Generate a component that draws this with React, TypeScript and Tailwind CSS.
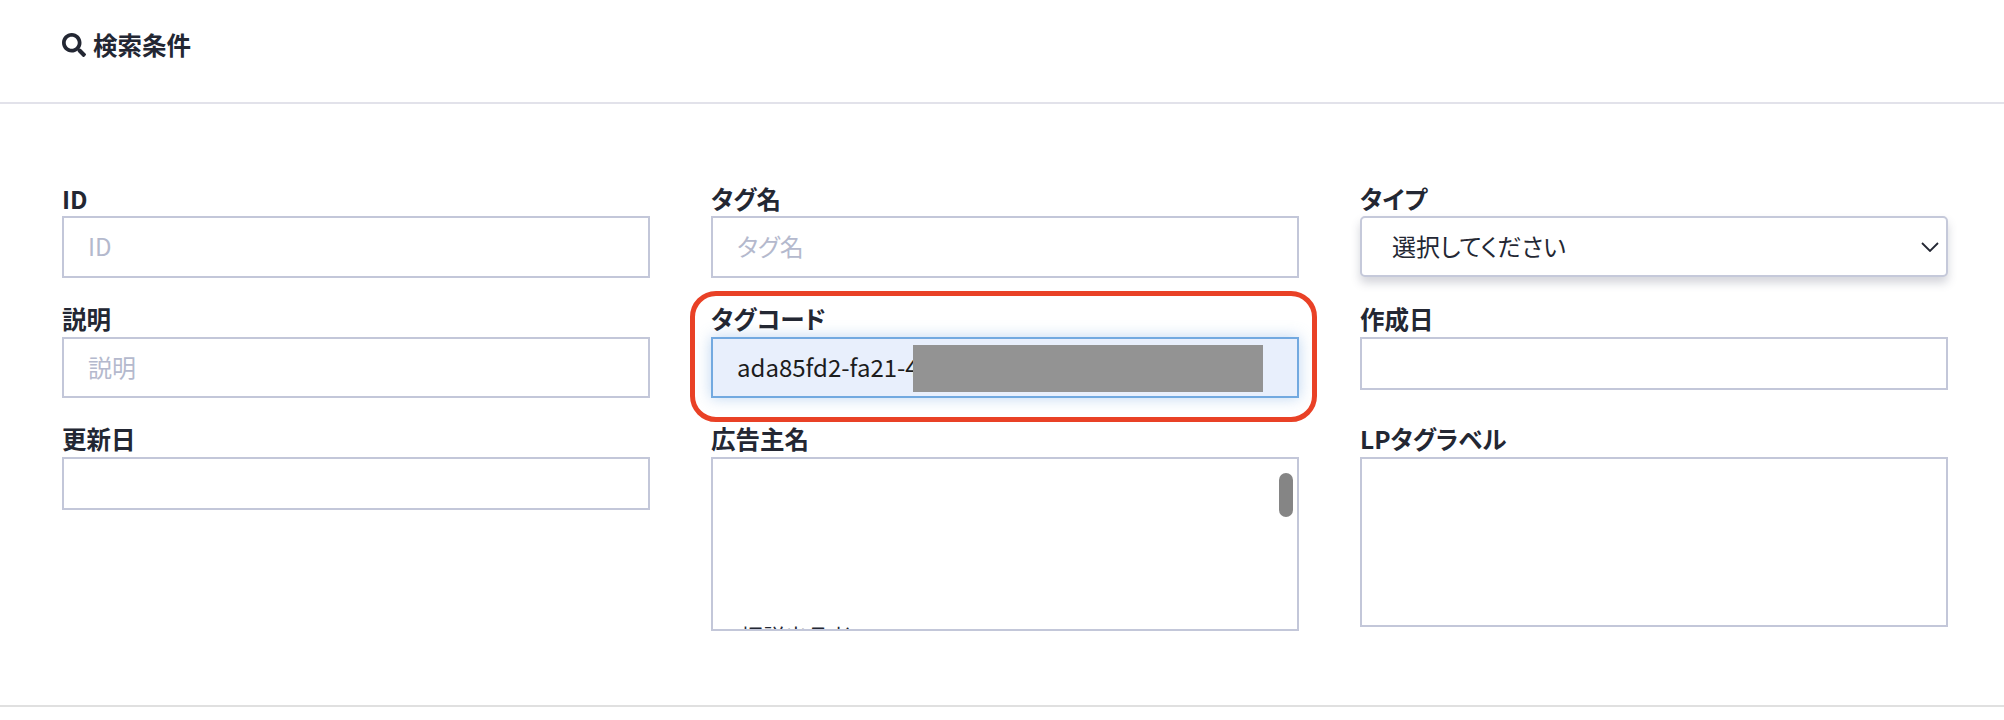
import { FaSearch } from "react-icons/fa";

const fieldBox = "w-full border-2 border-[#c3c7d9] bg-white px-[24px] pb-[3px] text-[24px] outline-none placeholder:text-[#b4b9cd]";

function Label({ children }: { children: string }) {
  return <label className="block h-[33px] text-[24.5px] font-bold leading-[30px] text-[#232733]">{children}</label>;
}

function Field({ label, placeholder, boxClass }: { label: string; placeholder?: string; boxClass: string }) {
  return (
    <div>
      <Label>{label}</Label>
      <input placeholder={placeholder} className={`${fieldBox} ${boxClass}`} />
    </div>
  );
}

export default function App() {
  return (
    <div
      className="h-[720px] w-[2004px] overflow-hidden bg-white text-[#232733] [font-feature-settings:'palt']"
      style={{ fontFamily: '"Noto Sans CJK JP", "Noto Sans", sans-serif' }}
    >
      <div className="flex h-[104px] items-center gap-[7px] border-b-2 border-[#e2e2ea] pb-[12px] pl-[62px]">
        <FaSearch className="h-[24px] w-[24px]" />
        <h2 className="text-[24.5px] font-bold">検索条件</h2>
      </div>

      <div className="grid grid-cols-3 gap-x-[61px] gap-y-[26px] pl-[62px] pr-[56px] pt-[80px]">
        <Field label="ID" placeholder="ID" boxClass="-mt-[1px] h-[62px]" />
        <Field label="タグ名" placeholder="タグ名" boxClass="-mt-[1px] h-[62px]" />
        <div>
          <Label>タイプ</Label>
          <div className="-mt-[1px] flex h-[61px] items-center justify-between rounded-[5px] border-2 border-[#c5c9da] bg-white pb-[2px] pl-[30px] pr-[7px] shadow-[0_6px_10px_rgba(60,65,90,0.22)]">
            <span className="text-[24px]">選択してください</span>
            <svg width="18" height="10" viewBox="0 0 18 10" fill="none" stroke="#232733" strokeWidth="1.8" className="mt-[2px]">
              <path d="M1 1l8 8 8-8" />
            </svg>
          </div>
        </div>

        <Field label="説明" placeholder="説明" boxClass="h-[61px]" />
        <div className="relative">
          <Label>タグコード</Label>
          <div className="flex h-[61px] items-center border-2 border-[#72a9e0] bg-[#e8effc] pb-[2px] pl-[24px] shadow-[0_0_14px_rgba(110,165,225,0.45)]">
            <span className="text-[24px] text-[#1c1c1c]">ada85fd2-fa21-4</span>
          </div>
          <div className="absolute left-[202px] top-[41px] h-[47px] w-[350px] bg-[#939393]" />
          <div className="absolute -bottom-[24px] -left-[21px] -right-[18px] -top-[13px] rounded-[26px] border-[5px] border-[#e94126]" />
        </div>
        <Field label="作成日" boxClass="h-[53px]" />

        <Field label="更新日" boxClass="h-[53px]" />
        <div>
          <Label>広告主名</Label>
          <div className="relative h-[174px] overflow-hidden border-2 border-[#c3c7d9] bg-white">
            <div className="pl-[28px] pt-[161px] text-[22px] leading-[30px]">振説出品者</div>
            <div className="absolute right-[4px] top-[14px] h-[44px] w-[14px] rounded-full bg-[#858585]" />
          </div>
        </div>
        <div>
          <Label>LPタグラベル</Label>
          <div className="h-[170px] border-2 border-[#c3c7d9] bg-white" />
        </div>
      </div>

      <div className="mt-[74px] border-b-2 border-[#e0e0e0]" />
    </div>
  );
}
